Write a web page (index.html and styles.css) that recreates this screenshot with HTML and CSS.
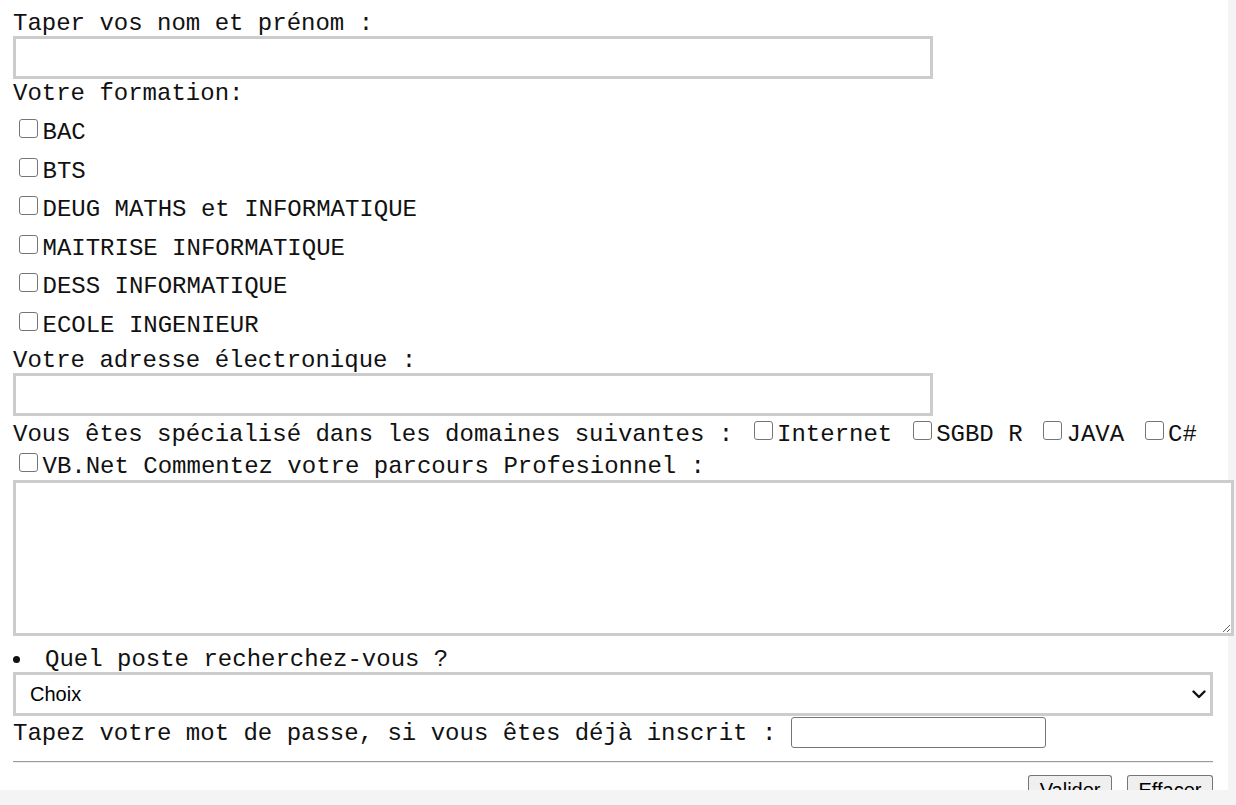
FILE: index.html
```html
<!DOCTYPE html>
<html lang="fr">
<head>
<meta charset="utf-8">
<title>Formulaire d'inscription</title>
<link rel="stylesheet" href="styles.css">
</head>
<body>
<form class="page">
  <div class="label">Taper vos nom et prénom :</div>
  <input class="field" type="text">
  <div class="label">Votre formation:</div>
  <div class="choices">
    <label class="choice"><input type="checkbox" class="box">BAC</label>
    <label class="choice"><input type="checkbox" class="box">BTS</label>
    <label class="choice"><input type="checkbox" class="box">DEUG MATHS et INFORMATIQUE</label>
    <label class="choice"><input type="checkbox" class="box">MAITRISE INFORMATIQUE</label>
    <label class="choice"><input type="checkbox" class="box">DESS INFORMATIQUE</label>
    <label class="choice"><input type="checkbox" class="box">ECOLE INGENIEUR</label>
  </div>
  <div class="label label-email">Votre adresse électronique :</div>
  <input class="field" type="text">
  <p class="skills">Vous êtes spécialisé dans les domaines suivantes : <input type="checkbox" class="box">Internet <input type="checkbox" class="box">SGBD R <input type="checkbox" class="box">JAVA <input type="checkbox" class="box">C# <input type="checkbox" class="box">VB.Net Commentez votre parcours Profesionnel :</p>
  <textarea class="comment"></textarea>
  <ul class="post"><li>Quel poste recherchez-vous ?</li></ul>
  <div class="select-wrap">
    <select class="job"><option>Choix</option></select>
    <svg class="chevron" width="14" height="9" viewBox="0 0 14 9" aria-hidden="true"><path d="M1.5 1.5 L7 7 L12.5 1.5" fill="none" stroke="#111" stroke-width="2.4" stroke-linecap="round" stroke-linejoin="round"/></svg>
  </div>
  <div class="password-row"><span class="label-inline">Tapez votre mot de passe, si vous êtes déjà inscrit :</span><input type="password" class="password"></div>
  <hr class="rule">
  <div class="actions"><button type="submit" class="btn">Valider</button><button type="reset" class="btn">Effacer</button></div>
</form>
</body>
</html>
```

FILE: styles.css
```css
body {
  margin: 0;
  background: #f4f4f4;
  font-family: "Liberation Mono", "DejaVu Sans Mono", monospace;
  font-size: 24px;
  color: #111;
}

.page {
  box-sizing: border-box;
  width: 1228px;
  height: 790px;
  padding: 9px 15px 0 13px;
  background: #fff;
  margin: 0;
}

.label {
  padding-top: 2px;
  line-height: 25px;
  white-space: pre;
}

.label-email {
  margin-top: 9px;
}

.field {
  display: block;
  box-sizing: border-box;
  width: 920px;
  height: 43px;
  margin: 0;
  border: 3px solid #cccccc;
  background: #fff;
  padding: 0 6px;
  font-family: Arial, "Liberation Sans", sans-serif;
  font-size: 20px;
  outline: none;
}

.choices {
  display: flex;
  flex-direction: column;
}

.choice {
  display: block;
  box-sizing: border-box;
  height: 38.5px;
  padding-top: 13px;
  line-height: 27px;
  white-space: pre;
}

.box {
  appearance: none;
  -webkit-appearance: none;
  box-sizing: border-box;
  width: 19px;
  height: 19px;
  margin: 0 4.5px 1px 6px;
  border: 1.5px solid #767676;
  border-radius: 3px;
  background: #fff;
  vertical-align: baseline;
}

.skills {
  box-sizing: border-box;
  height: 64px;
  margin: 0;
  padding-top: 3px;
  line-height: 32px;
}

.comment {
  display: block;
  box-sizing: border-box;
  width: 1221px;
  height: 156px;
  margin: 0;
  border: 3px solid #cccccc;
  padding: 3px;
  background: #fff;
  font-family: "Liberation Mono", monospace;
  font-size: 20px;
  outline: none;
}

.post {
  margin: 9px 0 0;
  padding: 2px 0 0;
  list-style: disc inside;
  line-height: 25px;
}

.select-wrap {
  position: relative;
  width: 1200px;
}

.job {
  display: block;
  box-sizing: border-box;
  width: 1200px;
  height: 44px;
  margin: 0;
  border: 3px solid #cccccc;
  border-radius: 0;
  padding: 0 40px 0 14px;
  appearance: none;
  -webkit-appearance: none;
  background: #fff;
  font-family: Arial, "Liberation Sans", sans-serif;
  font-size: 20px;
  color: #000;
  outline: none;
}

.chevron {
  position: absolute;
  right: 7px;
  top: 18px;
  pointer-events: none;
}

.password-row {
  display: flex;
  align-items: center;
  height: 33px;
}

.label-inline {
  padding-top: 2px;
  line-height: 25px;
  white-space: pre;
}

.password {
  box-sizing: border-box;
  width: 255px;
  height: 31.5px;
  margin: 0 0 0 14.4px;
  border: 1px solid #767676;
  border-radius: 3px;
  padding: 1.5px 3px;
  background: #fff;
  font-family: Arial, "Liberation Sans", sans-serif;
  font-size: 20px;
  outline: none;
}

.rule {
  width: 1200px;
  height: 0;
  margin: 12px 0;
  border: 0;
  border-top: 1px solid #9a9a9a;
  border-bottom: 1px solid #eeeeee;
}

.actions {
  display: flex;
  justify-content: flex-end;
  align-items: flex-start;
  gap: 15px;
  width: 1200px;
}

.btn {
  box-sizing: border-box;
  flex: none;
  height: 30px;
  margin: 0;
  padding: 1.5px 10.5px 0;
  border: 1px solid #767676;
  border-bottom-color: transparent;
  border-radius: 3px 3px 0 0;
  background: #efefef;
  font-family: Arial, "Liberation Sans", sans-serif;
  font-size: 20px;
  line-height: 23px;
  color: #000;
}
```
